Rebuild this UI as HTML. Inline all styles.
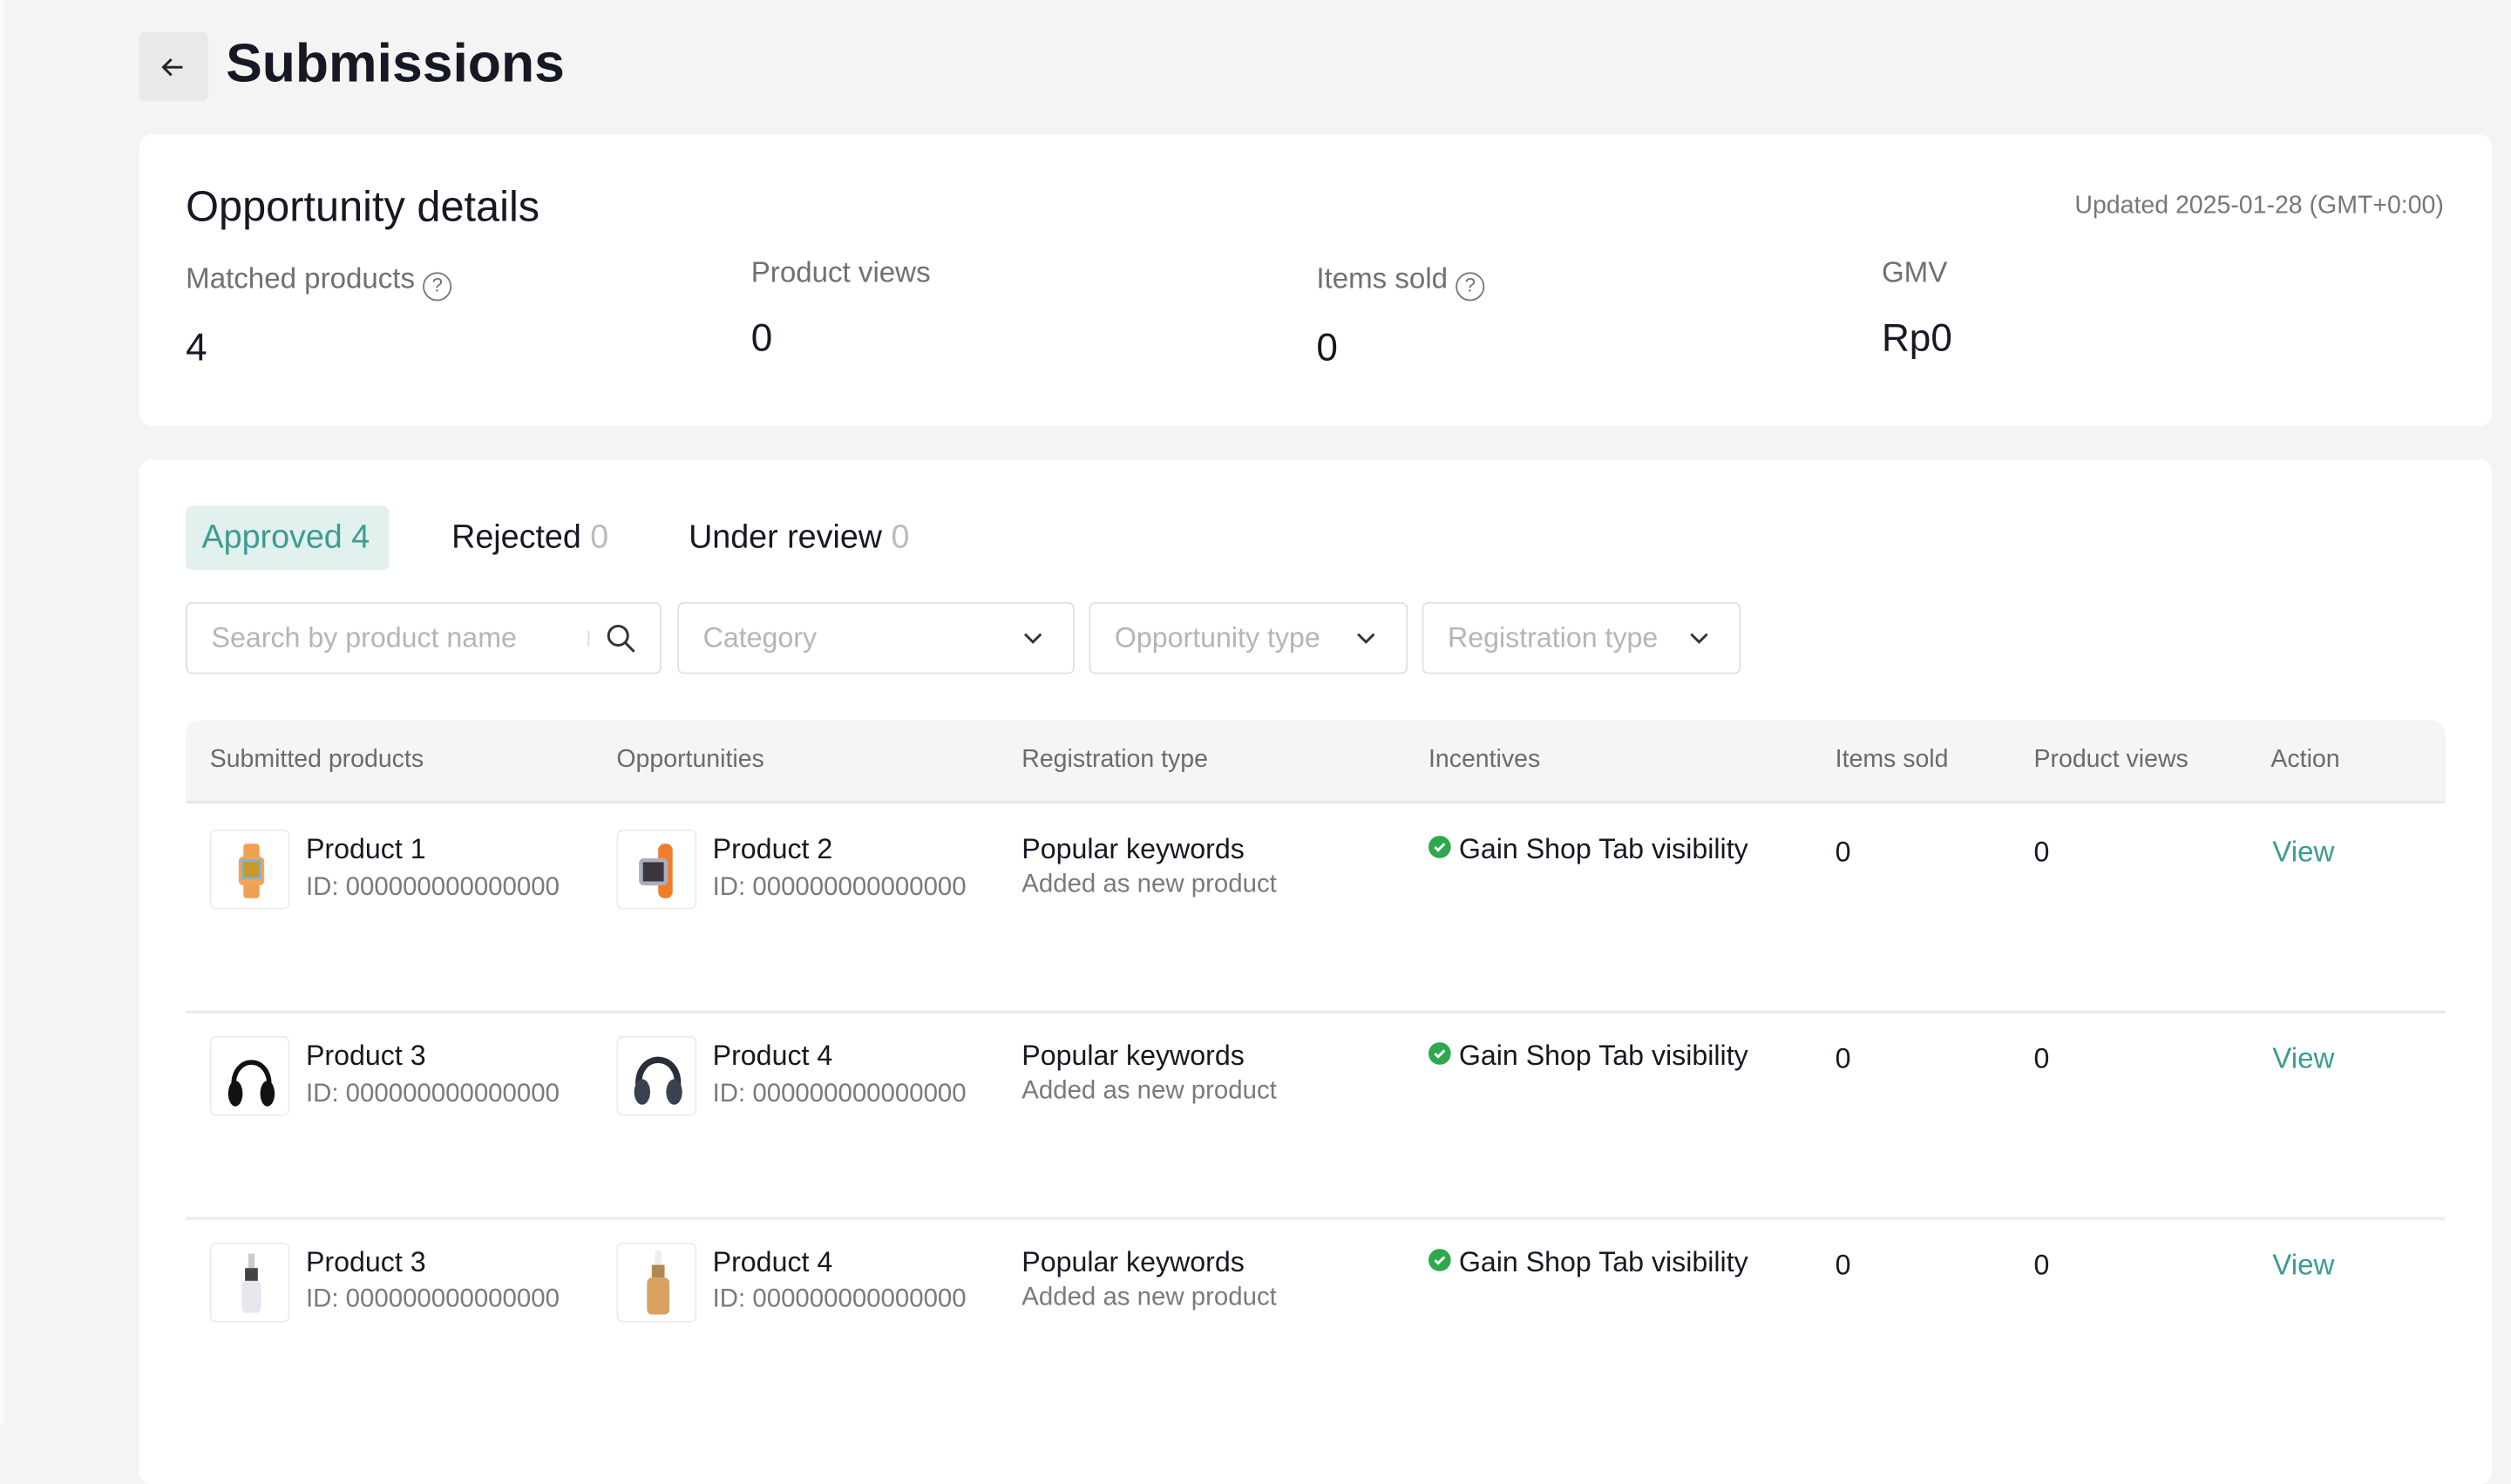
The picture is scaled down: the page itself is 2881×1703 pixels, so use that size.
<!DOCTYPE html>
<html><head><meta charset="utf-8"><style>
*{margin:0;padding:0;box-sizing:border-box}
html,body{width:2881px;height:1635px;overflow:hidden;background:#f4f4f4}
#s{position:absolute;left:0;top:0;width:1568px;height:890px;transform:scale(1.8374);transform-origin:0 0;font-family:"Liberation Sans",sans-serif;color:#161823}
.a{position:absolute;white-space:nowrap}
.card{position:absolute;background:#fff;border-radius:8px}
.lab{font-size:18px;color:#707070}
.val{font-size:24px;color:#161823}
.inp{position:absolute;top:376px;height:45px;border:1.5px solid #e0e0e0;border-radius:4px;background:#fff}
.inp span{position:absolute;left:15px;top:11px;font-size:17.5px;color:#b5b5b5}
.th{font-size:15.5px;color:#6b6b6b;top:466px}
.img{position:absolute;width:50px;height:50px;border:1px solid #ececec;border-radius:4px;background:#fff;overflow:hidden}
.nm{font-size:17.5px}
.id{font-size:16px;color:#7a7a7a}
.view{font-size:18px;color:#3a9c92}
.line{position:absolute;left:116px;width:1411px;height:2px;background:#ececec}
</style></head><body><div id="s">
<div style="position:absolute;left:0;top:0;width:2px;height:890px;background:#fafafa"></div>
<div style="position:absolute;left:87px;top:20px;width:43px;height:43px;background:#e9e9e9;border-radius:4px"></div>
<svg class="a" style="left:99px;top:33px" width="18" height="18" viewBox="0 0 18 18"><path d="M15 9H3M8 4L3 9l5 5" fill="none" stroke="#222" stroke-width="1.6"/></svg>
<div class="a" style="left:141px;top:21px;font-size:34px;font-weight:bold">Submissions</div>

<div class="card" style="left:87px;top:84px;width:1469px;height:182px"></div>
<div class="a" style="left:116px;top:114px;font-size:26.5px">Opportunity details</div>
<div class="a" style="right:42px;top:120px;font-size:15.5px;color:#777">Updated 2025-01-28 (GMT+0:00)</div>
<div class="a lab" style="left:116px;top:164px">Matched products <span style="display:inline-block;width:18px;height:18px;border:1.5px solid #777;border-radius:50%;font-size:12px;text-align:center;line-height:15px;vertical-align:-2px">?</span></div>
<div class="a lab" style="left:469px;top:160px">Product views</div>
<div class="a lab" style="left:822px;top:164px">Items sold <span style="display:inline-block;width:18px;height:18px;border:1.5px solid #777;border-radius:50%;font-size:12px;text-align:center;line-height:15px;vertical-align:-2px">?</span></div>
<div class="a lab" style="left:1175px;top:160px">GMV</div>
<div class="a val" style="left:116px;top:204px">4</div>
<div class="a val" style="left:469px;top:198px">0</div>
<div class="a val" style="left:822px;top:204px">0</div>
<div class="a val" style="left:1175px;top:198px">Rp0</div>

<div class="card" style="left:87px;top:287px;width:1469px;height:640px"></div>
<div style="position:absolute;left:116px;top:316px;width:127px;height:40px;background:#e2f0ee;border-radius:4px"></div>
<div class="a" style="left:126px;top:324px;font-size:20.5px;color:#3a9c92">Approved 4</div>
<div class="a" style="left:282px;top:324px;font-size:20.5px">Rejected <span style="color:#bbb">0</span></div>
<div class="a" style="left:430px;top:324px;font-size:20.5px">Under review <span style="color:#bbb">0</span></div>

<div class="inp" style="left:116px;width:297px"><span>Search by product name</span>
<div style="position:absolute;left:250px;top:17px;width:1px;height:10px;background:#ddd"></div>
<svg style="position:absolute;left:261px;top:12px" width="20" height="20" viewBox="0 0 20 20"><circle cx="8" cy="8" r="6" fill="none" stroke="#333" stroke-width="1.6"/><path d="M12.5 12.5L18 18" stroke="#333" stroke-width="1.6"/></svg></div>
<div class="inp" style="left:423px;width:248px"><span>Category</span><svg style="position:absolute;right:18px;top:17px" width="14" height="9" viewBox="0 0 14 9"><path d="M2 2l5 5 5-5" fill="none" stroke="#333" stroke-width="1.6"/></svg></div>
<div class="inp" style="left:680px;width:199px"><span>Opportunity type</span><svg style="position:absolute;right:18px;top:17px" width="14" height="9" viewBox="0 0 14 9"><path d="M2 2l5 5 5-5" fill="none" stroke="#333" stroke-width="1.6"/></svg></div>
<div class="inp" style="left:888px;width:199px"><span>Registration type</span><svg style="position:absolute;right:18px;top:17px" width="14" height="9" viewBox="0 0 14 9"><path d="M2 2l5 5 5-5" fill="none" stroke="#333" stroke-width="1.6"/></svg></div>

<div style="position:absolute;left:116px;top:450px;width:1411px;height:52px;background:#f5f5f5;border-radius:8px 8px 0 0;border-bottom:2px solid #e8e8e8"></div>
<div class="a th" style="left:131px">Submitted products</div>
<div class="a th" style="left:385px">Opportunities</div>
<div class="a th" style="left:638px">Registration type</div>
<div class="a th" style="left:892px">Incentives</div>
<div class="a th" style="left:1146px">Items sold</div>
<div class="a th" style="left:1270px">Product views</div>
<div class="a th" style="left:1418px">Action</div>

<div class="line" style="top:631px"></div>
<div class="line" style="top:760px"></div>

<!-- Row 1 -->
<div class="img" style="left:131px;top:518px"><svg width="50" height="50"><rect x="20" y="8" width="10" height="34" rx="2" fill="#f0a050"/><rect x="17" y="16" width="16" height="18" rx="3" fill="#f3a457"/><rect x="19.5" y="18.5" width="11" height="11" fill="#c79a2a" stroke="#7fb0d8" stroke-width="1.5"/></svg></div>
<div class="a nm" style="left:191px;top:520px">Product 1</div><div class="a id" style="left:191px;top:546px">ID: 000000000000000</div>
<div class="img" style="left:385px;top:518px"><svg width="50" height="50"><rect x="25" y="8" width="9" height="34" rx="4" fill="#ef7d2a"/><rect x="13" y="17" width="18" height="17" rx="3" fill="#aab0c0"/><rect x="15.5" y="19.5" width="13" height="12" fill="#3b3540"/></svg></div>
<div class="a nm" style="left:445px;top:520px">Product 2</div><div class="a id" style="left:445px;top:546px">ID: 000000000000000</div>
<div class="a nm" style="left:638px;top:520px">Popular keywords</div><div class="a id" style="left:638px;top:544px">Added as new product</div>
<svg class="a" style="left:892px;top:522px" width="14" height="14"><circle cx="7" cy="7" r="7" fill="#2ea84f"/><path d="M4 7l2 2 4-4" fill="none" stroke="#fff" stroke-width="1.6"/></svg>
<div class="a nm" style="left:911px;top:520px">Gain Shop Tab visibility</div>
<div class="a nm" style="left:1146px;top:522px">0</div><div class="a nm" style="left:1270px;top:522px">0</div>
<div class="a view" style="left:1419px;top:522px">View</div>
<!-- Row 2 -->
<div class="img" style="left:131px;top:647px"><svg width="50" height="50"><path d="M14 32 C12 10 38 10 36 32" fill="none" stroke="#111" stroke-width="3"/><ellipse cx="15" cy="35" rx="4.5" ry="8" fill="#111"/><ellipse cx="35" cy="35" rx="4.5" ry="8" fill="#111"/></svg></div>
<div class="a nm" style="left:191px;top:649px">Product 3</div><div class="a id" style="left:191px;top:675px">ID: 000000000000000</div>
<div class="img" style="left:385px;top:647px"><svg width="50" height="50"><path d="M13 32 C10 8 40 8 37 32" fill="none" stroke="#2a2e38" stroke-width="4"/><ellipse cx="15" cy="34" rx="5" ry="8" fill="#3a4150"/><ellipse cx="35" cy="34" rx="5" ry="8" fill="#3a4150"/></svg></div>
<div class="a nm" style="left:445px;top:649px">Product 4</div><div class="a id" style="left:445px;top:675px">ID: 000000000000000</div>
<div class="a nm" style="left:638px;top:649px">Popular keywords</div><div class="a id" style="left:638px;top:673px">Added as new product</div>
<svg class="a" style="left:892px;top:651px" width="14" height="14"><circle cx="7" cy="7" r="7" fill="#2ea84f"/><path d="M4 7l2 2 4-4" fill="none" stroke="#fff" stroke-width="1.6"/></svg>
<div class="a nm" style="left:911px;top:649px">Gain Shop Tab visibility</div>
<div class="a nm" style="left:1146px;top:651px">0</div><div class="a nm" style="left:1270px;top:651px">0</div>
<div class="a view" style="left:1419px;top:651px">View</div>
<!-- Row 3 -->
<div class="img" style="left:131px;top:776px"><svg width="50" height="50"><rect x="23" y="6" width="4" height="10" fill="#ccc"/><rect x="21" y="15" width="8" height="8" fill="#444"/><rect x="19" y="23" width="12" height="20" rx="3" fill="#e6e6ee"/></svg></div>
<div class="a nm" style="left:191px;top:778px">Product 3</div><div class="a id" style="left:191px;top:803px">ID: 000000000000000</div>
<div class="img" style="left:385px;top:776px"><svg width="50" height="50"><rect x="23" y="4" width="4" height="10" fill="#eee"/><rect x="21" y="13" width="8" height="8" fill="#b08850"/><rect x="18" y="21" width="14" height="23" rx="3" fill="#d9a060"/></svg></div>
<div class="a nm" style="left:445px;top:778px">Product 4</div><div class="a id" style="left:445px;top:803px">ID: 000000000000000</div>
<div class="a nm" style="left:638px;top:778px">Popular keywords</div><div class="a id" style="left:638px;top:802px">Added as new product</div>
<svg class="a" style="left:892px;top:780px" width="14" height="14"><circle cx="7" cy="7" r="7" fill="#2ea84f"/><path d="M4 7l2 2 4-4" fill="none" stroke="#fff" stroke-width="1.6"/></svg>
<div class="a nm" style="left:911px;top:778px">Gain Shop Tab visibility</div>
<div class="a nm" style="left:1146px;top:780px">0</div><div class="a nm" style="left:1270px;top:780px">0</div>
<div class="a view" style="left:1419px;top:780px">View</div>
</div></body></html>
